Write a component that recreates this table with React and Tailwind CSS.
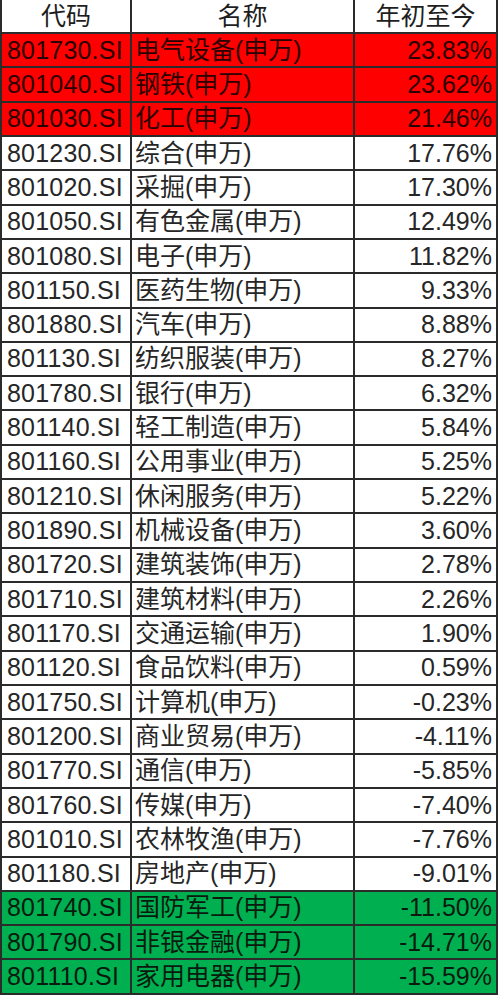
const ROWS = [
  ['801730.SI', '电气设备(申万)', '23.83%', 'red'],
  ['801040.SI', '钢铁(申万)', '23.62%', 'red'],
  ['801030.SI', '化工(申万)', '21.46%', 'red'],
  ['801230.SI', '综合(申万)', '17.76%'],
  ['801020.SI', '采掘(申万)', '17.30%'],
  ['801050.SI', '有色金属(申万)', '12.49%'],
  ['801080.SI', '电子(申万)', '11.82%'],
  ['801150.SI', '医药生物(申万)', '9.33%'],
  ['801880.SI', '汽车(申万)', '8.88%'],
  ['801130.SI', '纺织服装(申万)', '8.27%'],
  ['801780.SI', '银行(申万)', '6.32%'],
  ['801140.SI', '轻工制造(申万)', '5.84%'],
  ['801160.SI', '公用事业(申万)', '5.25%'],
  ['801210.SI', '休闲服务(申万)', '5.22%'],
  ['801890.SI', '机械设备(申万)', '3.60%'],
  ['801720.SI', '建筑装饰(申万)', '2.78%'],
  ['801710.SI', '建筑材料(申万)', '2.26%'],
  ['801170.SI', '交通运输(申万)', '1.90%'],
  ['801120.SI', '食品饮料(申万)', '0.59%'],
  ['801750.SI', '计算机(申万)', '-0.23%'],
  ['801200.SI', '商业贸易(申万)', '-4.11%'],
  ['801770.SI', '通信(申万)', '-5.85%'],
  ['801760.SI', '传媒(申万)', '-7.40%'],
  ['801010.SI', '农林牧渔(申万)', '-7.76%'],
  ['801180.SI', '房地产(申万)', '-9.01%'],
  ['801740.SI', '国防军工(申万)', '-11.50%', 'green'],
  ['801790.SI', '非银金融(申万)', '-14.71%', 'green'],
  ['801110.SI', '家用电器(申万)', '-15.59%', 'green'],
];

function rowBg(c) {
  if (c === 'red') return 'bg-[#ff0000] text-[#2a0000]';
  if (c === 'green') return 'bg-[#00b050] text-[#0a1a0f]';
  return 'bg-white text-[#262626]';
}

export default function App() {
  return (
    <div
      className="w-[500px] h-[998px] bg-white overflow-hidden"
      style={{ fontFamily: '"Liberation Sans", "Noto Sans CJK SC", sans-serif' }}
    >
      <div className="w-[498px] border-l-2 border-[#2b2b2b] text-[25px] leading-none">
        {/* header */}
        <div className="flex h-[34px] border-b-2 border-[#2b2b2b] bg-white text-[#1e1e1e]">
          <div className="w-[130px] border-r-2 border-[#2b2b2b] flex items-center justify-center">代码</div>
          <div className="w-[223px] border-r-2 border-[#2b2b2b] flex items-center justify-center">名称</div>
          <div className="w-[143px] border-r-2 border-[#2b2b2b] flex items-center justify-center">年初至今</div>
        </div>
        {ROWS.map(([code, name, pct, c]) => (
          <div key={code} className={`flex h-[34.32px] border-b-2 border-[#2b2b2b] ${rowBg(c)}`}>
            <div className="w-[130px] border-r-2 border-[#2b2b2b] flex items-center pl-[5px] tracking-[0.2px]">{code}</div>
            <div className="w-[223px] border-r-2 border-[#2b2b2b] flex items-center pl-[3px] whitespace-nowrap">{name}</div>
            <div className="w-[143px] border-r-2 border-[#2b2b2b] flex items-center justify-end pr-[4px]">{pct}</div>
          </div>
        ))}
      </div>
    </div>
  );
}
